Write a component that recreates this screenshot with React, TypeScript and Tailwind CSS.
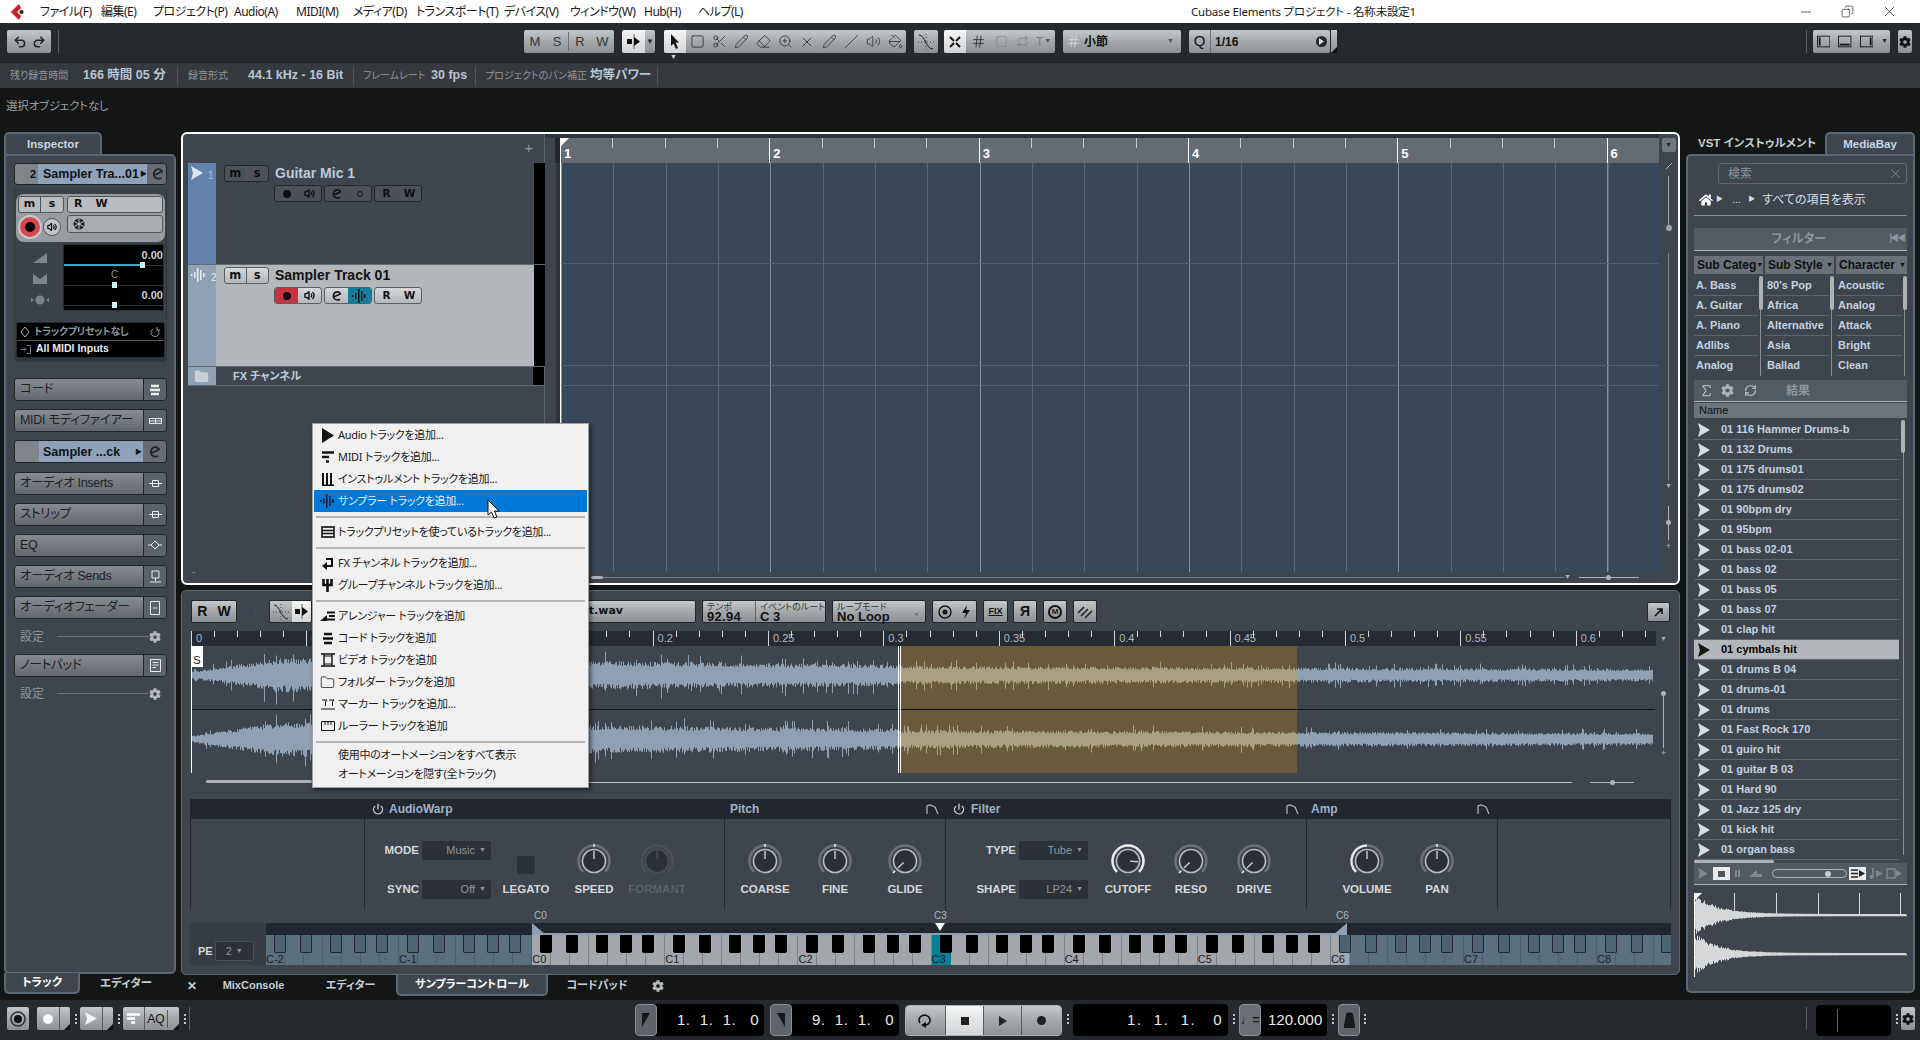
import { useMemo } from 'react';
import type { ReactNode } from 'react';
import { Undo2, Redo2, Square, Scissors, Pencil, Eraser, ZoomIn, X, Slash, Volume2, PaintBucket, Hash, Power, Folder, Repeat, Minus, Copy, Sigma, RefreshCw } from 'lucide-react';
import { FaCog, FaHome } from 'react-icons/fa';

const metal = 'bg-linear-to-b from-[#c6c9cb] via-[#a4a8ab] to-[#8d9195]';
const lightBtn = 'bg-linear-to-b from-[#f4f5f5] to-[#d2d4d6]';
const dim = 'text-[#8f959b]';

function Tri({ w = 12, h = 14, c = '#d5dde6' }: { w?: number; h?: number; c?: string }) {
  return (
    <svg width={w} height={h} viewBox="0 0 12 14" preserveAspectRatio="none" className="shrink-0">
      <polygon points="0,0 12,7 0,14 2,7" fill={c} />
    </svg>
  );
}

function Bars({ c = '#fff', s = 1 }: { c?: string; s?: number }) {
  return (
    <svg width={15 * s} height={14 * s} viewBox="0 0 15 14" className="shrink-0">
      <g fill={c}>
        <rect x="0" y="6" width="1.5" height="2" />
        <rect x="3" y="4" width="1.5" height="6" />
        <rect x="6" y="0" width="1.5" height="14" />
        <rect x="9" y="2" width="1.5" height="10" />
        <rect x="12" y="5" width="1.5" height="4" />
      </g>
    </svg>
  );
}

function Env() {
  return (
    <svg width="13" height="10" viewBox="0 0 13 10" className="shrink-0">
      <path d="M1 10V2L4 1L9 3L12 10" fill="none" stroke="#aeb8c2" strokeWidth="1.2" />
    </svg>
  );
}

function Dots() {
  return (
    <svg width="3" height="11" viewBox="0 0 3 11" className="shrink-0">
      <g fill="#c5c8ca">
        <rect x="1" y="0" width="2" height="2" />
        <rect x="1" y="4" width="2" height="2" />
        <rect x="1" y="8" width="2" height="2" />
      </g>
    </svg>
  );
}

function Corner() {
  return (
    <svg width="6" height="6" viewBox="0 0 6 6" className="shrink-0">
      <polygon points="6,0 6,6 0,6" fill="#111" />
    </svg>
  );
}

function E({ c = '#23272b', size = 14 }: { c?: string; size?: number }) {
  return (
    <svg width={size} height={size} viewBox="0 0 14 14" className="shrink-0">
      <path d="M2.5 8.5L11 4.5C10 1.5 4.5 1 3 5.5C1.8 9.5 5 13 10.5 11" fill="none" stroke={c} strokeWidth="1.8" />
    </svg>
  );
}

function TitleBar() {
  const menus = [
    ['ファイル(F)', 'w-[61px]'],
    ['編集(E)', 'w-[52px]'],
    ['プロジェクト(P)', 'w-[81px]'],
    ['Audio(A)', 'w-[62px]'],
    ['MIDI(M)', 'w-[57px]'],
    ['メディア(D)', 'w-[63px]'],
    ['トランスポート(T)', 'w-[88px]'],
    ['デバイス(V)', 'w-[66px]'],
    ['ウィンドウ(W)', 'w-[74px]'],
    ['Hub(H)', 'w-[54px]'],
    ['ヘルプ(L)', 'w-[60px]'],
  ];
  return (
    <div className="h-[23px] shrink-0 bg-white flex items-center text-[12px] tracking-[-0.5px] text-[#1a1a1a] font-['Noto_Sans','Noto_Sans_CJK_JP',sans-serif]">
      <svg width="18" height="18" viewBox="0 0 18 18" className="ml-[8px] shrink-0">
        <polygon points="9,1 17,9 9,17 1,9" fill="#ececec" />
        <polygon points="11,1 3,9 11,17 13,13 9,9 13,5" fill="#c3202c" />
        <circle cx="13.5" cy="9" r="2" fill="#222" />
      </svg>
      <div className="ml-[14px] flex w-[1151px]">
        {menus.map(([t, w]) => (
          <span key={t} className={`${w} whitespace-nowrap`}>{t}</span>
        ))}
      </div>
      <span className="whitespace-nowrap text-[11.5px] tracking-[-0.2px]">Cubase Elements プロジェクト - 名称未設定1</span>
      <div className="ml-auto flex items-center gap-[27px] pr-[22px]">
        <Minus size={16} strokeWidth={1} />
        <Copy size={13} strokeWidth={1.2} className="-scale-x-100" />
        <X size={17} strokeWidth={1} />
      </div>
    </div>
  );
}

function Toolbar() {
  const tools = [Square, Scissors, Pencil, Eraser, ZoomIn, X, Pencil, Slash, Volume2, PaintBucket];
  return (
    <div className="h-[40px] shrink-0 bg-[#26292d] border-b border-[#1c1e21] flex items-start pt-[7px] text-[#23272b]">
      <div className={`ml-[7px] w-[44px] h-[23px] rounded-[2px] ${metal} flex items-center justify-around px-[3px]`}>
        <Undo2 size={14} strokeWidth={2.6} />
        <Redo2 size={14} strokeWidth={2.6} />
      </div>
      <div className="ml-[7px] w-px h-[23px] bg-[#5a5f64]" />
      <div className={`ml-[465px] w-[90px] h-[23px] rounded-[2px] ${metal} flex items-center text-[13px] text-[#30353a]`}>
        <span className="w-[22px] text-center">M</span>
        <span className="w-[23px] text-center border-r border-[#6d7276]">S</span>
        <span className="w-[22px] text-center">R</span>
        <span className="w-[23px] text-center">W</span>
      </div>
      <div className="ml-[8px] w-[33px] h-[23px] rounded-[2px] flex overflow-hidden">
        <div className={`w-[23px] ${lightBtn} flex items-center justify-center`}>
          <svg width="15" height="15" viewBox="0 0 15 15">
            <rect x="1" y="5" width="5" height="5" fill="#111" />
            <path d="M8 0V15" stroke="#666" />
            <polygon points="8,3 14,7.5 8,12" fill="#111" />
          </svg>
        </div>
        <div className={`flex-1 ${metal} flex items-center justify-center text-[8px]`}>▼</div>
      </div>
      <div className="ml-[9px] flex flex-col items-start">
        <div className={`w-[242px] h-[23px] rounded-[2px] ${metal} flex items-center overflow-hidden`}>
          <div className={`w-[22px] h-full ${lightBtn} flex items-center justify-center`}>
            <svg width="10" height="15" viewBox="0 0 10 15"><path d="M1 0V12L3.6 9.5L6 15L8 14L5.6 8.6H9Z" fill="#111" /></svg>
          </div>
          {tools.map((T, i) => (
            <div key={i} className="w-[22px] flex items-center justify-center">
              <T size={i === 5 ? 16 : 15} strokeWidth={1.2} />
            </div>
          ))}
        </div>
        <span className="ml-[6px] text-[7px] leading-[8px] text-[#d5d7d9]">▼</span>
      </div>
      <div className={`ml-[8px] w-[24px] h-[23px] rounded-[2px] ${metal} flex items-center justify-center`}>
        <svg width="18" height="18" viewBox="0 0 18 18">
          <path d="M2 2C8 2 9 16 16 16" fill="none" stroke="#222" />
          <path d="M9 1V17M1 9H17" stroke="#444" strokeDasharray="1 2" />
        </svg>
      </div>
      <div className={`ml-[6px] w-[111px] h-[23px] rounded-[2px] ${metal} flex items-center overflow-hidden`}>
        <div className={`w-[22px] h-full ${lightBtn} flex items-center justify-center`}>
          <svg width="12" height="12" viewBox="0 0 12 12"><path d="M1 1L5 5M11 1L7 5M1 11L5 7M11 11L7 7" stroke="#111" strokeWidth="2" /></svg>
        </div>
        <Hash size={15} strokeWidth={1.3} className="mx-[5px]" />
        <Square size={13} strokeWidth={1} className="mx-[4px] text-[#777c81]" />
        <Repeat size={13} strokeWidth={1.4} className="mx-[4px] text-[#777c81]" />
        <span className="ml-[3px] text-[12px] text-[#777c81]">T</span>
        <span className="ml-[1px] text-[7px] text-[#555]">▼</span>
      </div>
      <div className={`ml-[8px] w-[118px] h-[23px] rounded-[2px] ${metal} flex items-center px-[3px] text-[12px] font-bold`}>
        <Hash size={15} strokeWidth={1} className="text-[#e8eaec]" />
        <span className="ml-[3px] text-[#111]">小節</span>
        <span className="ml-auto mr-[4px] text-[7px] text-[#555]">▼</span>
      </div>
      <div className={`ml-[8px] w-[141px] h-[23px] rounded-[2px] ${metal} flex items-center text-[#111]`}>
        <span className="w-[22px] text-center text-[15px] border-r border-[#6d7276]">Q</span>
        <span className="ml-[4px] text-[12px] font-bold">1/16</span>
        <span className="ml-auto mr-[3px] w-[11px] h-[11px] rounded-full bg-[#24282c] flex items-center justify-center">
          <svg width="5" height="7" viewBox="0 0 5 7"><polygon points="0,0 5,3.5 0,7" fill="#d8dadc" /></svg>
        </span>
      </div>
      <div className={`ml-[1px] w-[6px] h-[23px] ${metal} flex items-end`}><Corner /></div>
      <div className="ml-[469px] w-px h-[23px] bg-[#5a5f64]" />
      <div className={`ml-[6px] w-[77px] h-[23px] rounded-[2px] ${metal} flex items-center gap-[8px] pl-[4px]`}>
        <svg width="15" height="13" viewBox="0 0 15 13"><rect x=".5" y=".5" width="14" height="12" fill="none" stroke="#111" /><rect x="2" y="2" width="2" height="9" fill="#111" /></svg>
        <svg width="15" height="13" viewBox="0 0 15 13"><rect x=".5" y=".5" width="14" height="12" fill="none" stroke="#111" /><rect x="2" y="9" width="11" height="2" fill="#111" /></svg>
        <svg width="15" height="13" viewBox="0 0 15 13"><rect x=".5" y=".5" width="14" height="12" fill="none" stroke="#111" /><rect x="11" y="2" width="2" height="9" fill="#111" /></svg>
        <span className="ml-auto mr-[2px] text-[7px]">▼</span>
      </div>
      <div className={`ml-[8px] w-[14px] h-[23px] rounded-[2px] ${metal} flex items-center justify-center`}>
        <FaCog size={12} color="#111" />
      </div>
    </div>
  );
}

function InfoLine() {
  const Sep = () => <div className="w-px h-[18px] bg-[#55595e] shrink-0" />;
  const lab = `text-[10px] ${dim} whitespace-nowrap shrink-0`;
  const val = 'text-[12.5px] font-bold text-[#b8c6d4] whitespace-nowrap shrink-0';
  return (
    <div className="h-[25px] shrink-0 bg-[#363a3e] flex items-center">
      <span className={`${lab} ml-[10px] w-[73px]`}>残り録音時間</span>
      <span className={`${val} w-[94px]`}>166 時間 05 分</span>
      <Sep />
      <span className={`${lab} ml-[10px] w-[60px]`}>録音形式</span>
      <span className={`${val} w-[105px]`}>44.1 kHz - 16 Bit</span>
      <Sep />
      <span className={`${lab} ml-[9px] w-[68px]`}>フレームレート</span>
      <span className={`${val} w-[44px]`}>30 fps</span>
      <Sep />
      <span className={`${lab} ml-[9px] w-[105px]`}>プロジェクトのパン補正</span>
      <span className={`${val} w-[67px]`}>均等パワー</span>
      <Sep />
    </div>
  );
}

function SmallBtn({ children, w, on }: { children: ReactNode; w: string; on?: boolean }) {
  return (
    <span className={`${w} h-full flex items-center justify-center ${on ? 'text-[#111]' : ''}`}>{children}</span>
  );
}

function TrackButtons({ sel }: { sel?: boolean }) {
  const grp = sel
    ? 'bg-linear-to-b from-[#d6d8da] to-[#b5b8bb] border-[#5a5f64] text-[#111]'
    : 'bg-[#4b5157] border-[#23272b] text-[#0d0f11]';
  const g = `h-[17px] rounded-[3px] border flex items-center overflow-hidden font-['DejaVu_Sans',sans-serif] font-bold text-[11.5px] ${grp}`;
  return (
    <div className="flex flex-col">
      <div className={`${g} w-[45px] mt-[2px]`}>
        <SmallBtn w="w-[22px] border-r border-[#5a5f64]">m</SmallBtn>
        <SmallBtn w="w-[22px]">s</SmallBtn>
      </div>
    </div>
  );
}

function TrackControls({ sel }: { sel?: boolean }) {
  const grp = sel
    ? 'bg-linear-to-b from-[#d6d8da] to-[#b5b8bb] border-[#5a5f64] text-[#111]'
    : 'bg-[#4b5157] border-[#23272b] text-[#0d0f11]';
  const g = `w-[48px] h-[17px] rounded-[3px] border flex items-center overflow-hidden font-['DejaVu_Sans',sans-serif] font-bold text-[10.5px] ${grp}`;
  return (
    <div className="flex gap-[2px] ml-[58px] mt-[3px]">
      <div className={g}>
        <span className={`w-[24px] h-full flex items-center justify-center ${sel ? 'bg-[#c7333f]' : ''}`}>
          <span className="w-[8px] h-[8px] rounded-full bg-[#0d0f11]" />
        </span>
        <span className="w-[24px] flex justify-center"><Volume2 size={11} strokeWidth={3} /></span>
      </div>
      <div className={g}>
        <span className="w-[24px] flex justify-center"><E c="#111" size={12} /></span>
        <span className={`w-[24px] h-full flex items-center justify-center ${sel ? 'bg-[#0f7f9a]' : ''}`}>
          {sel ? <Bars c="#0d1a20" /> : <span className="w-[6px] h-[6px] rounded-full border border-[#0d0f11]" />}
        </span>
      </div>
      <div className={g}>
        <span className="w-[24px] text-center">R</span>
        <span className="w-[24px] text-center">W</span>
      </div>
    </div>
  );
}

function Track({ n, name, sel }: { n: number; name: string; sel?: boolean }) {
  return (
    <div className={`flex ${sel ? 'h-[101px]' : 'h-[102px] border-b border-[#636a71]'}`}>
      <div className={`w-[28px] shrink-0 pt-[3px] pl-[3px] flex gap-[2px] items-start text-[10px] ${sel ? 'bg-[#8fa1b5] text-[#e8edf2]' : 'bg-[#6282ad] text-[#a9bdd6]'}`}>
        {sel ? <Bars c="#e8edf2" /> : <Tri w={12} h={14} c="#dde6f0" />}
        <span className="ml-[3px] mt-[2px]">{n}</span>
      </div>
      <div className={`w-[318px] shrink-0 ${sel ? 'bg-[#b3b7bb]' : 'bg-[#3e454c]'}`}>
        <div className="flex items-start ml-[8px] h-[19px]">
          <TrackButtons sel={sel} />
          <span className={`ml-[6px] mt-[1px] text-[14px] font-bold leading-[18px] ${sel ? 'text-[#111]' : 'text-[#b9cadc]'}`}>{name}</span>
        </div>
        <TrackControls sel={sel} />
      </div>
      <div className="w-[11px] shrink-0 bg-black" />
    </div>
  );
}

function ProjectWindow() {
  const cells = Array.from({ length: 21 }, (_, i) => i);
  return (
    <div className="h-[453px] shrink-0 border-2 border-white rounded-[6px] bg-[#3e454c] flex overflow-hidden">
      <div className="w-[362px] shrink-0 pl-[5px] border-r border-[#5c636a] flex flex-col">
        <div className="h-[29px] flex items-center justify-end pr-[11px] text-[#8d949b] text-[15px]"><span>+</span></div>
        <Track n={1} name="Guitar Mic 1" />
        <Track n={2} name="Sampler Track 01" sel />
        <div className="h-[20px] flex border-t border-[#636a71] border-b">
          <div className="w-[28px] bg-[#8fa1b5] flex items-center justify-center">
            <Folder size={15} color="#dfe3e7" fill="#c9cfd5" strokeWidth={1} />
          </div>
          <span className="w-[318px] pl-[17px] text-[11px] font-bold text-[#c3cfdb] leading-[18px]">FX チャンネル</span>
          <div className="w-[11px] bg-black" />
        </div>
        <div className="flex-1 flex items-end pl-[4px] pb-[6px] text-[10px] text-[#8d949b]"><span className="leading-[10px]">-</span></div>
      </div>
      <div className="w-[1114px] shrink-0 flex flex-col">
        <div className="h-[4px] bg-[#2e343a]" />
        <div className="h-[25px] flex">
          <div className="w-[10px]" />
          <div className="w-[5px] bg-[#23282e]" />
          <div className="w-[1099px] bg-[#646b72] flex relative">
            <svg width="9" height="9" viewBox="0 0 9 9" className="absolute left-0 top-0"><polygon points="0,0 9,0 0,9" fill="#fff" /></svg>
            {cells.map((i) => (
              <div key={i} className="w-[52.33px] shrink-0 flex text-[13px] font-bold text-white">
                <div className={`w-px ${i % 4 === 0 ? 'h-[25px] bg-white' : 'h-[10px] bg-[#c5c9cd]'}`} />
                {i % 4 === 0 && <span className="ml-[3px] mt-[7px] leading-[17px]">{i / 4 + 1}</span>}
              </div>
            ))}
          </div>
        </div>
        <div className="h-[409px] flex">
          <div className="w-[15px] border-r-4 border-[#2e343a]" />
          <div className="w-[1099px] border-l border-white bg-[#364859] bg-[image:repeating-linear-gradient(90deg,#84939f_0_1px,transparent_1px_209.3px),repeating-linear-gradient(90deg,#56687a_0_1px,transparent_1px_52.33px)] flex flex-col">
            <div className="h-[101px] border-b border-[#4f6173]" />
            <div className="h-[102px] border-b border-[#4f6173]" />
            <div className="h-[20px] border-b border-[#4f6173]" />
          </div>
        </div>
        <div className="flex-1 flex items-center pl-[46px]">
          <div className="w-[12px] h-[3px] rounded-full bg-[#aeb2b6]" />
          <div className="w-[961px] h-px bg-[#7a8087]" />
          <span className="text-[7px] text-[#aeb2b6]">▼</span>
          <div className="ml-[8px] w-[60px] h-px bg-[#aeb2b6] flex items-center justify-center"><span className="shrink-0 w-[5px] h-[5px] rounded-full bg-[#aeb2b6]" /></div>
        </div>
      </div>
      <div className="flex-1 flex flex-col items-center pt-[4px]">
        <div className="w-[14px] h-[14px] rounded-[2px] bg-[#70777e] flex items-center justify-center text-[7px] text-[#23272b]">▼</div>
        <svg width="8" height="8" viewBox="0 0 8 8" className="mt-[10px]"><path d="M1 7L7 1" stroke="#aeb2b6" /></svg>
        <div className="mt-[6px] w-px h-[49px] bg-[#a0a5aa]" />
        <div className="w-[6px] h-[6px] rounded-full bg-[#a0a5aa]" />
        <div className="mt-[22px] w-px h-[228px] bg-[#7a8087]" />
        <span className="text-[7px] text-[#aeb2b6]">▼</span>
        <div className="mt-[14px] w-px h-[34px] bg-[#aeb2b6] flex items-center justify-center"><span className="shrink-0 w-[5px] h-[5px] rounded-full bg-[#aeb2b6]" /></div>
        <span className="text-[9px] text-[#aeb2b6]">+</span>
      </div>
    </div>
  );
}

function rng(seed: number) {
  let s = seed;
  return () => {
    s = (s * 16807) % 2147483647;
    return s / 2147483647;
  };
}

function Waveform() {
  const { blue, tan } = useMemo(() => {
    const r = rng(4242);
    let blue = '';
    let tan = '';
    for (let c = 0; c < 2; c++) {
      const cy = c === 0 ? 29 : 93;
      for (let x = 0; x < 1462; x++) {
        let env: number;
        if (x < 90) env = 4 + (x / 90) * 18;
        else if (x < 300) env = 21 - ((x - 90) / 210) * 2;
        else if (x < 710) env = 19 - ((x - 300) / 410) * 6;
        else env = 11.5 - ((x - 710) / 752) * 4;
        const spike = r() > 0.93 ? 1.7 : 1;
        const up = env * (0.5 + r() * 0.3) * spike;
        const dn = env * (0.5 + r() * 0.35) * spike;
        const seg = `M${x}.5 ${(cy - up).toFixed(1)}V${(cy + dn).toFixed(1)}`;
        if (x >= 709 && x < 1106) tan += seg;
        else blue += seg;
      }
    }
    return { blue, tan };
  }, []);
  return (
    <svg width="1464" height="127" viewBox="0 0 1464 127" className="block">
      <rect x="709" y="0" width="397" height="127" fill="#6a5a3b" />
      <path d="M0 63.5H1464" stroke="#111418" />
      <path d={blue} stroke="#8da0b4" fill="none" />
      <path d={tan} stroke="#aa9f82" fill="none" />
      <path d="M.5 0V137M707.5 0V127M709.5 0V127" stroke="#fff" fill="none" />
    </svg>
  );
}

function Knob({ label, v, arc, off }: { label: string; v: number; arc?: 'full' | 'half'; off?: boolean }) {
  const cx = 18;
  const cy = 17;
  const pt = (a: number, r: number) => {
    const t = (a * Math.PI) / 180;
    return `${(cx + r * Math.sin(t)).toFixed(2)} ${(cy - r * Math.cos(t)).toFixed(2)}`;
  };
  const arcPath = (from: number, to: number) => `M${pt(from, 15.5)}A15.5 15.5 0 ${to - from > 180 ? 1 : 0} 1 ${pt(to, 15.5)}`;
  const a = -135 + 270 * v;
  return (
    <div className="flex flex-col items-center w-full">
      <svg width="36" height="34" viewBox="0 0 36 34">
        <path d={arcPath(-135, 135)} fill="none" stroke={off ? '#4a5056' : '#6d7277'} strokeWidth="2.5" />
        {arc === 'full' && <path d={arcPath(-135, 135)} fill="none" stroke="#e8eaec" strokeWidth="2.5" />}
        {arc === 'half' && <path d={arcPath(-135, 0)} fill="none" stroke="#e8eaec" strokeWidth="2.5" />}
        {!off && !arc && <path d={`M${pt(a, 14)}L${pt(a, 17)}`} stroke="#e8eaec" strokeWidth="1.5" />}
        <circle cx={cx} cy={cy} r="11.5" fill="#2b3036" stroke={off ? '#494f55' : '#b9bdc1'} strokeWidth="1.6" />
        <path d={`M${pt(a, 2)}L${pt(a, 10)}`} stroke={off ? '#494f55' : '#d0d3d6'} strokeWidth="1.4" />
      </svg>
      <span className={`mt-[5px] text-[11.5px] font-bold leading-[13px] whitespace-nowrap ${off ? 'text-[#5c6369]' : 'text-[#d5d9dd]'}`}>{label}</span>
    </div>
  );
}

function Drop({ label, value }: { label: string; value: string }) {
  return (
    <div className="flex items-center justify-end">
      <span className="text-[11.5px] font-bold text-[#d5d9dd]">{label}</span>
      <div className="ml-[3px] w-[69px] h-[19px] shrink-0 bg-[#2c3138] rounded-[2px] flex items-center justify-end pr-[5px] gap-[4px] text-[11px] text-[#8f959b]">
        {value}
        <span className="text-[7px]">▼</span>
      </div>
    </div>
  );
}

function Keyboard() {
  const keys = Array.from({ length: 74 }, (_, i) => i);
  const blackPos: Record<number, string> = {
    0: '-right-[2px]',
    1: '-right-[9px]',
    3: '-right-[1px]',
    4: '-right-[6px]',
    5: '-right-[9px]',
  };
  return (
    <div className="flex-1 min-w-0 flex flex-col overflow-hidden">
      <div className="h-[12px] bg-[#22262e] flex">
        <div className="w-[266px] shrink-0" />
        <div className="w-[815px] shrink-0 border-b-2 border-[#8ea0b4] flex">
          <svg width="14" height="12" viewBox="0 0 14 12"><polygon points="0,0 14,12 0,12" fill="#8ea0b4" /></svg>
          <svg width="10" height="8" viewBox="0 0 10 8" className="ml-[389px]"><polygon points="0,0 10,0 5,8" fill="#fff" /></svg>
          <svg width="14" height="12" viewBox="0 0 14 12" className="ml-auto"><polygon points="14,0 14,12 0,12" fill="#8ea0b4" /></svg>
        </div>
      </div>
      <div className="h-[30px] flex">
        {keys.map((i) => {
          const inRange = i >= 14 && i <= 56;
          const oct = Math.floor(i / 7);
          const note = i % 7;
          const nextIn = i >= 14 && i < 56;
          return (
            <div
              key={i}
              className={`relative w-[19.03px] shrink-0 border-r flex items-end ${i === 35 ? 'bg-[#0b7f98] border-[#0b7f98]' : inRange ? 'bg-[#a3a7ab] border-[#7d8286]' : 'bg-[#587080] border-[#4a606f]'}`}
            >
              {note === 0 && <span className="text-[11px] leading-[12px] text-[#1c2024] whitespace-nowrap">{`C${oct - 2}`}</span>}
              {blackPos[note] && (
                <div className={`absolute z-10 top-0 ${blackPos[note]} w-[12px] h-[18px] rounded-b-[2px] ${nextIn ? 'bg-black' : 'bg-[#4c6372] border border-t-0 border-[#20282e]'}`} />
              )}
            </div>
          );
        })}
      </div>
    </div>
  );
}

function LowerZone() {
  const ticks = Array.from({ length: 64 }, (_, i) => i);
  const label = (i: number) => {
    const v = (i * 0.01).toFixed(2).replace(/0$/, '');
    return i === 0 ? '0' : v;
  };
  const btn = `h-[23px] rounded-[2px] border border-[#23272b] ${metal} flex items-center text-[#111]`;
  const square = `${btn} justify-center`;
  return (
    <div className="h-[385px] shrink-0 mt-[5px] border border-[#5b6875] rounded-[5px] bg-[#3e454c] flex flex-col px-[8px] pt-[9px] overflow-hidden">
      <div className="h-[23px] flex shrink-0">
        <div className={`ml-[1px] w-[46px] ${square} gap-[10px] text-[14px] font-bold`}><span>R</span><span>W</span></div>
        <span className="ml-[16px] mt-[9px] w-[4px] h-[4px] rounded-full bg-[#36506b]" />
        <div className={`ml-[12px] w-[43px] ${btn} overflow-hidden`}>
          <span className="w-[22px] h-full flex items-center justify-center">
            <svg width="18" height="18" viewBox="0 0 18 18"><path d="M2 2C8 2 9 16 16 16" fill="none" stroke="#222" /><path d="M9 1V17M1 9H17" stroke="#444" strokeDasharray="1 2" /></svg>
          </span>
          <span className={`flex-1 h-full ${lightBtn} flex items-center justify-center`}>
            <svg width="15" height="15" viewBox="0 0 15 15"><rect x="1" y="5" width="5" height="5" fill="#111" /><path d="M8 0V15" stroke="#666" /><polygon points="8,3 14,7.5 8,12" fill="#111" /></svg>
          </span>
        </div>
        <div className={`w-[384px] ${btn} justify-end pr-[72px] text-[11px] font-bold font-['DejaVu_Sans',sans-serif]`}><span>it.wav</span></div>
        <div className={`ml-[6px] w-[124px] ${btn}`}>
          <div className="w-[65px] pl-[4px] border-r border-[#5f6468] h-full flex flex-col justify-center leading-[10px]">
            <span className="text-[9px] text-[#33373b]">テンポ</span>
            <span className="text-[13px] font-bold tracking-[0.3px]">92.94</span>
          </div>
          <div className="flex-1 pl-[4px] h-full flex flex-col justify-center leading-[10px]">
            <span className="text-[9px] text-[#33373b] whitespace-nowrap">イベントのルート</span>
            <span className="text-[13px] font-bold">C 3</span>
          </div>
        </div>
        <div className={`ml-[6px] w-[94px] ${btn} justify-between pr-[5px]`}>
          <div className="pl-[4px] flex flex-col justify-center leading-[10px]">
            <span className="text-[9px] text-[#33373b]">ループモード</span>
            <span className="text-[13px] font-bold">No Loop</span>
          </div>
          <span className="mt-[8px] text-[7px] text-[#777c81]">▼</span>
        </div>
        <div className={`ml-[6px] w-[45px] ${btn} justify-around`}>
          <svg width="14" height="14" viewBox="0 0 14 14"><circle cx="7" cy="7" r="6" fill="none" stroke="#111" strokeWidth="1.4" /><circle cx="7" cy="7" r="2.5" fill="#111" /></svg>
          <svg width="10" height="14" viewBox="0 0 10 14"><polygon points="6,0 1,8 5,8 3,14 9,5 5,5" fill="#111" /></svg>
        </div>
        <div className={`ml-[6px] w-[25px] ${square} text-[9px] font-bold underline`}>FIX</div>
        <div className={`ml-[5px] w-[24px] ${square} text-[14px] font-bold`}>Я</div>
        <div className={`ml-[6px] w-[24px] ${square}`}>
          <span className="w-[14px] h-[14px] rounded-full border-2 border-[#111] flex items-center justify-center text-[8px] font-bold leading-none">M</span>
        </div>
        <div className={`ml-[6px] w-[24px] ${square}`}>
          <svg width="16" height="14" viewBox="0 0 16 14"><path d="M1 8L7 2M4 11L11 4M8 13L15 6" stroke="#222" strokeWidth="1.6" /></svg>
        </div>
        <div className={`ml-[550px] w-[23px] mt-[2px] !h-[20px] ${square}`}>
          <svg width="10" height="10" viewBox="0 0 10 10"><path d="M1 9L8 2M3 2H8V7" fill="none" stroke="#111" strokeWidth="1.6" /></svg>
        </div>
      </div>
      <div className="flex shrink-0 mt-[8px]">
        <div className="w-[1465px] ml-[1px] flex flex-col shrink-0">
          <div className="h-[15px] bg-[#262b33] flex overflow-hidden text-[11px] text-[#aeb8c2]">
            {ticks.map((i) => (
              <div key={i} className="w-[23.08px] shrink-0 flex">
                <div className={`w-px shrink-0 ${i % 5 === 0 ? 'h-[15px] bg-[#d5d7d9]' : 'h-[6px] bg-[#d5d7d9]'}`} />
                {i % 5 === 0 && <span className="ml-[4px] leading-[15px] whitespace-nowrap shrink-0">{label(i)}</span>}
              </div>
            ))}
          </div>
          <div className="relative h-[127px]">
            <Waveform />
            <div className="absolute left-0 top-0 w-[12px] h-[21px] bg-white text-[11px] text-[#111] flex items-end justify-center leading-[13px]">S</div>
          </div>
          <div className="h-[10px] flex items-end">
            <div className="ml-[15px] w-[106px] h-[3px] rounded-full bg-[#aeb2b6]" />
            <div className="w-[1260px] h-px bg-[#c5c8ca]" />
            <div className="ml-[18px] w-[44px] h-px bg-[#aeb2b6] flex items-center justify-center"><span className="shrink-0 w-[5px] h-[5px] rounded-full bg-[#aeb2b6]" /></div>
          </div>
        </div>
        <div className="flex-1 flex flex-col items-center text-[#aeb2b6] pt-[3px]">
          <span className="text-[7px]">▼</span>
          <div className="mt-[46px] w-[5px] h-[5px] rounded-full bg-[#aeb2b6]" />
          <div className="w-px h-[52px] bg-[#aeb2b6]" />
          <span className="text-[9px] leading-[10px]">+</span>
        </div>
      </div>
      <div className="mt-[16px] h-[20px] shrink-0 bg-[#22262e] flex items-center text-[12px] font-bold text-[#9fb3c8]">
        <Power size={12} className="ml-[182px] text-[#d5d9dd]" strokeWidth={2.5} />
        <span className="ml-[5px] w-[341px]">AudioWarp</span>
        <span className="w-[196px]">Pitch</span>
        <Env />
        <Power size={12} className="ml-[14px] text-[#d5d9dd]" strokeWidth={2.5} />
        <span className="ml-[6px] w-[315px]">Filter</span>
        <Env />
        <span className="ml-[12px] w-[166px]">Amp</span>
        <Env />
      </div>
      <div className="h-[90px] shrink-0 flex">
        <div className="w-[174px] shrink-0 border-l border-[#23272b]" />
        <div className="w-[360px] shrink-0 border-l border-[#23272b] flex pt-[22px]">
          <div className="w-[126px] shrink-0 flex flex-col gap-[20px]">
            <Drop label="MODE" value="Music" />
            <Drop label="SYNC" value="Off" />
          </div>
          <div className="w-[70px] shrink-0 flex flex-col items-center">
            <div className="mt-[15px] w-[18px] h-[18px] rounded-[2px] bg-[#2c3138]" />
            <span className="mt-[9px] text-[11.5px] font-bold text-[#d5d9dd] leading-[13px]">LEGATO</span>
          </div>
          <div className="w-[60px] mt-[3px] ml-[3px] shrink-0"><Knob label="SPEED" v={0.5} /></div>
          <div className="w-[66px] mt-[3px] shrink-0"><Knob label="FORMANT" v={0.5} off /></div>
        </div>
        <div className="w-[221px] shrink-0 border-l border-[#23272b] flex pt-[25px] pl-[10px] gap-[10px]">
          <div className="w-[60px]"><Knob label="COARSE" v={0.5} /></div>
          <div className="w-[60px]"><Knob label="FINE" v={0.5} /></div>
          <div className="w-[60px]"><Knob label="GLIDE" v={0} /></div>
        </div>
        <div className="w-[361px] shrink-0 border-l border-[#23272b] flex pt-[22px]">
          <div className="w-[142px] shrink-0 flex flex-col gap-[20px]">
            <Drop label="TYPE" value="Tube" />
            <Drop label="SHAPE" value="LP24" />
          </div>
          <div className="flex mt-[3px] ml-[15px] gap-[13px]">
            <div className="w-[50px]"><Knob label="CUTOFF" v={0.85} arc="full" /></div>
            <div className="w-[50px]"><Knob label="RESO" v={0} /></div>
            <div className="w-[50px]"><Knob label="DRIVE" v={0} /></div>
          </div>
        </div>
        <div className="w-[191px] shrink-0 border-l border-[#23272b] flex pt-[25px] pl-[30px] gap-[10px]">
          <div className="w-[60px]"><Knob label="VOLUME" v={0.5} arc="half" /></div>
          <div className="w-[60px]"><Knob label="PAN" v={0.5} /></div>
        </div>
        <div className="flex-1 border-l border-r border-[#23272b]" />
      </div>
      <div className="h-[14px] shrink-0 flex items-end text-[10px] text-[#aeb8c2] leading-[14px]">
        <span className="ml-[344px] w-[400px]">C0</span>
        <span className="w-[402px]">C3</span>
        <span>C6</span>
      </div>
      <div className="h-[42px] shrink-0 flex">
        <div className="w-[76px] shrink-0 bg-[#363d44] flex items-end pb-[4px] pl-[8px] gap-[2px]">
          <span className="text-[11px] font-bold text-[#d5d9dd] leading-[20px]">PE</span>
          <div className="w-[39px] h-[20px] rounded-[2px] bg-[#2c3138] border border-[#4a5056] flex items-center justify-center gap-[4px] text-[11px] text-[#8f959b]">2 <span className="text-[7px]">▼</span></div>
        </div>
        <Keyboard />
      </div>
    </div>
  );
}

function BottomTabs() {
  return (
    <div className="h-[21px] shrink-0 flex items-center text-[11px] font-bold text-[#c5cdd5]">
      <span className="w-[21px] text-center text-[12px]">✕</span>
      <span className="w-[103px] text-center">MixConsole</span>
      <span className="w-[91px] text-center">エディター</span>
      <span className="w-[152px] h-full bg-[#3e454c] border-b-2 border-x-2 border-[#5b6875] rounded-b-[5px] flex items-center justify-center text-white whitespace-nowrap">サンプラーコントロール</span>
      <span className="w-[98px] text-center">コードパッド</span>
      <FaCog size={12} color="#b5b9bd" className="ml-[6px]" />
    </div>
  );
}

function Inspector() {
  const sections: [string, ReactNode][] = [
    ['コード', <svg width="12" height="12" viewBox="0 0 12 12"><path d="M2 2H10M1 6H11M2 10H10" stroke="#e8eaec" strokeWidth="2.5" /></svg>],
    ['MIDI モディファイアー', <svg width="13" height="10" viewBox="0 0 13 10"><path d="M.5 2.5H12.5V7.5H.5ZM6.5 2.5V7.5M.5 5H12.5" fill="none" stroke="#e8eaec" /></svg>],
    ['SAMPLER', null],
    ['オーディオ Inserts', <svg width="13" height="11" viewBox="0 0 13 11"><path d="M0 5.5H13M3.5 2.5H9.5V8.5H3.5Z" fill="none" stroke="#e8eaec" /></svg>],
    ['ストリップ', <svg width="13" height="11" viewBox="0 0 13 11"><path d="M0 5.5H13M3.5 2.5H9.5V8.5H3.5Z" fill="none" stroke="#e8eaec" /></svg>],
    ['EQ', <svg width="14" height="14" viewBox="0 0 14 14"><path d="M0 7H3L7 3L11 7H14M3 7L7 11L11 7" fill="none" stroke="#e8eaec" /></svg>],
    ['オーディオ Sends', <svg width="11" height="13" viewBox="0 0 11 13"><path d="M2 1H9V8H2ZM5.5 8V11M0 12H11" fill="none" stroke="#e8eaec" /></svg>],
    ['オーディオフェーダー', <svg width="10" height="14" viewBox="0 0 10 14"><path d="M.5 .5H9.5V13.5H.5ZM3 7H7" fill="none" stroke="#e8eaec" /></svg>],
  ];
  const btn = 'h-[23px] shrink-0 rounded-[4px] border border-[#20242a] flex overflow-hidden';
  const Settings = () => (
    <div className="h-[18px] shrink-0 flex items-center px-[6px] text-[12px] text-[#8f959b]">
      設定
      <div className="ml-[13px] flex-1 h-px bg-[#6d7277]" />
      <FaCog size={12} color="#b5b9bd" />
    </div>
  );
  return (
    <div className="ml-[4px] w-[172px] shrink-0 flex flex-col">
      <div className="h-[23px] w-[98px] bg-[#3e454c] border-t-2 border-x-2 border-[#5b6875] rounded-t-[5px] flex items-center justify-center text-[11.5px] font-bold text-[#c9d6e3]">Inspector</div>
      <div className="h-[820px] shrink-0 -mt-px bg-[#3e454c] border-2 border-[#5b6875] rounded-b-[5px] rounded-tr-[5px] pt-[7px] pl-[8px] pr-[7px] flex flex-col">
        <div className="h-[22px] w-[153px] shrink-0 rounded-[4px] border border-[#20242a] flex overflow-hidden">
          <div className="w-[23px] bg-[#7f858b] text-right pr-[2px] text-[11px] font-bold text-[#111] leading-[20px] shrink-0">2</div>
          <div className="flex-1 bg-[#8ea2ba] flex items-center pl-[5px] text-[12.5px] font-bold text-[#111] whitespace-nowrap">Sampler Tra...01<span className="ml-[1px] text-[7px]">▶</span></div>
          <div className="w-[23px] shrink-0 bg-[#676d73] flex items-center justify-center"><E /></div>
        </div>
        <div className="mt-[4px] w-[153px] h-[173px] shrink-0 bg-[#3a4148] border-x border-b-[7px] border-x-[#2f353b] border-b-[#30363c] rounded-b-[4px] pt-[5px]">
          <div className="mx-[1px] h-[48px] rounded-[8px] bg-[#989ca0] flex p-[2px] gap-[3px] text-[11px] font-bold font-['DejaVu_Sans',sans-serif] text-[#111]">
            <div className="w-[46px] shrink-0">
              <div className="h-[17px] flex rounded-[3px] border border-[#4f5459] bg-[#b9bcbf] overflow-hidden">
                <span className="w-[22px] text-center border-r border-[#4f5459] leading-[14px]">m</span>
                <span className="flex-1 text-center leading-[14px]">s</span>
              </div>
              <div className="flex items-center mt-[2px]">
                <div className="w-[24px] h-[24px] rounded-full bg-[#d84750] border-2 border-[#c8cbce] flex items-center justify-center shrink-0">
                  <span className="w-[10px] h-[10px] rounded-full bg-black" />
                </div>
                <div className="ml-[1px] w-[18px] h-[18px] rounded-full bg-[#c2c5c8] border border-[#4f5459] flex items-center justify-center shrink-0"><Volume2 size={10} strokeWidth={3} /></div>
              </div>
            </div>
            <div className="flex-1">
              <div className="h-[17px] flex items-center gap-[13px] pl-[6px] rounded-[3px] border border-[#4f5459] bg-[#b9bcbf]"><span>R</span><span>W</span></div>
              <div className="mt-[2px] h-[18px] flex items-center pl-[5px] rounded-[3px] border border-[#4f5459] bg-[#a9adb0]">
                <svg width="12" height="12" viewBox="0 0 12 12"><circle cx="6" cy="6" r="5.5" fill="#222" /><path d="M6 1V11M1.5 3.5L10.5 8.5M10.5 3.5L1.5 8.5" stroke="#c8cbce" /></svg>
              </div>
            </div>
          </div>
          <div className="flex mt-[2px] mx-[1px]">
            <div className="w-[47px] shrink-0 flex flex-col items-center gap-[11px] pt-[9px] text-[#70777e]">
              <svg width="14" height="10" viewBox="0 0 14 10"><polygon points="0,10 14,0 14,10" fill="#7d848b" /></svg>
              <svg width="14" height="10" viewBox="0 0 14 10"><polygon points="0,0 7,5 14,0 14,10 0,10" fill="#7d848b" /></svg>
              <svg width="18" height="10" viewBox="0 0 18 10"><circle cx="9" cy="5" r="4.5" fill="#7d848b" /><polygon points="3,5 0,3 0,7" fill="#7d848b" /><polygon points="15,5 18,3 18,7" fill="#7d848b" /></svg>
            </div>
            <div className="w-[101px] h-[67px] shrink-0 bg-black rounded-[2px] border border-[#262b30] flex flex-col text-[11px] font-bold text-[#c8d2dc] text-right leading-[14px]">
              <span className="mt-[3px]">0.00</span>
              <div className="h-[6px] flex items-center shrink-0"><div className="w-[76px] h-[2px] bg-[#2fb0c8]" /><div className="w-[5px] h-[6px] bg-[#d5f0f6]" /><div className="flex-1 h-px bg-[#2c3136]" /></div>
              <span className="text-center text-[10px] font-normal text-[#8f959b] pl-[2px] h-[14px]">C</span>
              <div className="h-[6px] flex items-center shrink-0"><div className="w-[48px] h-px bg-[#2c3136]" /><div className="w-[5px] h-[6px] bg-[#d5f0f6]" /><div className="flex-1 h-px bg-[#2c3136]" /></div>
              <span className="h-[14px]">0.00</span>
              <div className="h-[6px] flex items-center shrink-0"><div className="w-[48px] h-px bg-[#2c3136]" /><div className="w-[5px] h-[6px] bg-[#d5f0f6]" /><div className="flex-1 h-px bg-[#2c3136]" /></div>
            </div>
          </div>
          <div className="mt-[11px] mx-[1px] h-[36px] bg-black rounded-[3px] border border-[#262b30] flex flex-col text-[10px]">
            <div className="h-[19px] flex items-center pl-[3px] pr-[4px] text-[#8f959b] border-b border-[#50565c]">
              <svg width="10" height="12" viewBox="0 0 10 12"><path d="M5 1L9 6L5 11L1 6Z" fill="none" stroke="#aeb2b6" /></svg>
              <span className="ml-[4px] flex-1 font-bold tracking-[-0.3px]">トラックプリセットなし</span>
              <svg width="10" height="10" viewBox="0 0 10 10"><path d="M3 2A4 4 0 1 0 7 2M7 0V3H10" fill="none" stroke="#8f959b" /></svg>
            </div>
            <div className="flex-1 flex items-center pl-[4px]">
              <svg width="10" height="9" viewBox="0 0 10 9"><path d="M0 4.5H5M3 2.5L5 4.5L3 6.5M6 .5H9.5V8.5H6" fill="none" stroke="#70777e" /></svg>
              <span className="ml-[5px] text-[10.5px] font-bold text-[#e8eaec]">All MIDI Inputs</span>
            </div>
          </div>
        </div>
        <div className="mt-[16px] w-[153px] flex flex-col gap-[8.2px]">
          {sections.map(([t, icon]) =>
            t === 'SAMPLER' ? (
              <div key={t} className={btn}>
                <div className="w-[24px] bg-[#7f858b]" />
                <div className="flex-1 bg-[#8ea2ba] pl-[4px] flex items-center text-[12.5px] font-bold text-[#111]">Sampler ...ck<span className="ml-auto mr-[1px] text-[7px]">▶</span></div>
                <div className="w-[23px] bg-[#676d73] flex items-center justify-center"><E /></div>
              </div>
            ) : (
              <div key={t} className={btn}>
                <div className="flex-1 bg-linear-to-b from-[#868c92] to-[#62686e] pl-[5px] flex items-center text-[12.5px] tracking-[-0.3px] text-[#1d2125] whitespace-nowrap">{t}</div>
                <div className="w-[23px] bg-[#5c6269] border-l border-[#20242a] flex items-center justify-center">{icon}</div>
              </div>
            ),
          )}
          <Settings />
          <div className={btn}>
            <div className="flex-1 bg-linear-to-b from-[#868c92] to-[#62686e] pl-[5px] flex items-center text-[12.5px] tracking-[-0.3px] text-[#1d2125]">ノートパッド</div>
            <div className="w-[23px] bg-[#5c6269] border-l border-[#20242a] flex items-center justify-center">
              <svg width="11" height="13" viewBox="0 0 11 13"><path d="M.5 .5H10.5V12.5H.5ZM2.5 3.5H8.5M2.5 6H8.5M2.5 8.5H6" fill="none" stroke="#e8eaec" /></svg>
            </div>
          </div>
          <Settings />
        </div>
      </div>
      <div className="h-[21px] shrink-0 -mt-px flex items-center text-[11.5px] font-bold">
        <span className="w-[76px] h-full bg-[#3e454c] border-b-2 border-x-2 border-[#5b6875] rounded-b-[5px] flex items-center justify-center text-white">トラック</span>
        <span className="ml-[20px] text-[#c5cdd5]">エディター</span>
      </div>
    </div>
  );
}

function FilterCol({ head, items, w }: { head: string; items: string[]; w: string }) {
  return (
    <div className={`${w} shrink-0`}>
      <div className="h-[18px] bg-[#6a7178] flex items-center pl-[3px] text-[12px] font-bold text-[#0e1012] whitespace-nowrap overflow-hidden">
        {head}
        <span className="ml-auto pr-[1px] text-[7px]">▼</span>
      </div>
      <div className="mt-[2px] flex">
        <div className="flex-1 min-w-0">
          {items.map((t, i) => (
            <div key={t} className={`h-[20px] pl-[2px] leading-[19px] text-[11px] font-bold text-[#c4d2e0] whitespace-nowrap ${i < 4 ? 'border-b border-[#5f666d]' : ''}`}>{t}</div>
          ))}
        </div>
        <div className="w-[5px] shrink-0 flex flex-col items-center">
          <div className="w-[4px] h-[34px] rounded-full bg-[#aeb2b6]" />
          <div className="w-px flex-1 bg-[#8a9096]" />
        </div>
      </div>
    </div>
  );
}

function MediaBay() {
  const names = ['01 116 Hammer Drums-b', '01 132 Drums', '01 175 drums01', '01 175 drums02', '01 90bpm dry', '01 95bpm', '01 bass 02-01', '01 bass 02', '01 bass 05', '01 bass 07', '01 clap hit', '01 cymbals hit', '01 drums B 04', '01 drums-01', '01 drums', '01 Fast Rock 170', '01 guiro hit', '01 guitar B 03', '01 Hard 90', '01 Jazz 125 dry', '01 kick hit', '01 organ bass'];
  const preview = useMemo(() => {
    const r = rng(99);
    let p = '';
    for (let c = 0; c < 2; c++) {
      const cy = c === 0 ? 22 : 61;
      for (let x = 0; x < 212; x++) {
        const env = 1 + 19 * Math.exp(-x / 24) * (0.7 + r() * 0.4);
        p += `M${x}.5 ${(cy - env).toFixed(1)}V${(cy + env).toFixed(1)}`;
      }
    }
    return p;
  }, []);
  return (
    <div className="ml-[6px] w-[229px] shrink-0 flex flex-col">
      <div className="h-[23px] flex items-center text-[11.5px] font-bold">
        <span className="w-[139px] pl-[12px] text-[#c5cdd5] whitespace-nowrap">VST インストゥルメント</span>
        <span className="w-[90px] h-full bg-[#3e454c] border-t-2 border-x-2 border-[#5b6875] rounded-t-[5px] flex items-center justify-center text-[#c9d6e3]">MediaBay</span>
      </div>
      <div className="h-[839px] shrink-0 -mt-px bg-[#3e454c] border-2 border-[#5b6875] rounded-[5px] rounded-tr-none pl-[6px] pr-[6px] flex flex-col">
        <div className="mt-[7px] ml-[24px] w-[189px] h-[21px] shrink-0 border border-[#5f666d] rounded-[3px] flex items-center pl-[9px] pr-[3px] text-[12px] text-[#8f959b]">
          検索
          <X size={15} strokeWidth={1.3} className="ml-auto" />
        </div>
        <div className="h-[32px] shrink-0 w-[213px] border-b border-[#8a9096] flex items-center pl-[5px] text-[12px] text-[#d5dde6]">
          <FaHome size={14} color="#fff" />
          <span className="ml-[3px] text-[7px]">▶</span>
          <span className="ml-[9px] text-[11px]">...</span>
          <span className="ml-[7px] text-[7px]">▶</span>
          <span className="ml-[7px] whitespace-nowrap">すべての項目を表示</span>
        </div>
        <div className="mt-[12px] h-[23px] shrink-0 w-[213px] bg-[#525a62] border-b border-[#aeb2b6] flex items-center text-[12px] font-bold text-[#8f959b]">
          <span className="flex-1 text-center pl-[14px]">フィルター</span>
          <span className="pr-[3px] text-[9px] tracking-[-2px]">|◀◀</span>
        </div>
        <div className="mt-[5px] w-[213px] flex gap-[2px] shrink-0">
          <FilterCol w="w-[69px]" head="Sub Categ" items={['A. Bass', 'A. Guitar', 'A. Piano', 'Adlibs', 'Analog']} />
          <FilterCol w="w-[69px]" head="Sub Style" items={["80's Pop", 'Africa', 'Alternative', 'Asia', 'Ballad']} />
          <FilterCol w="w-[71px]" head="Character" items={['Acoustic', 'Analog', 'Attack', 'Bright', 'Clean']} />
        </div>
        <div className="mt-[4px] h-[22px] shrink-0 w-[213px] bg-[#525a62] border-b border-[#aeb2b6] flex items-center pl-[5px] text-[#aeb2b6]">
          <Sigma size={15} strokeWidth={2} />
          <FaCog size={13} className="ml-[7px]" />
          <RefreshCw size={13} strokeWidth={2.5} className="ml-[10px]" />
          <span className="ml-[29px] text-[12px] font-bold text-[#8f959b]">結果</span>
        </div>
        <div className="mt-[1px] h-[15px] shrink-0 w-[213px] bg-[#6d747b] pl-[5px] text-[11px] leading-[15px] text-[#111]">Name</div>
        <div className="flex w-[213px] h-[443px] shrink-0 mt-[2px]">
          <div className="w-[205px] shrink-0">
            {names.map((n, i) => (
              <div key={n} className={`h-[20px] flex items-center pl-[4px] text-[11px] font-bold border-b border-[#5f666d] ${i === 11 ? 'bg-[#b3b7bb] text-black' : 'text-[#c4d2e0]'}`}>
                <Tri w={12} h={14} c={i === 11 ? '#101a10' : '#d5dde6'} />
                <span className="ml-[11px] whitespace-nowrap">{n}</span>
              </div>
            ))}
            <div className="h-[3px] w-[80px] rounded-full bg-[#aeb2b6]" />
          </div>
          <div className="flex-1 flex flex-col items-center">
            <div className="w-[4px] h-[33px] rounded-full bg-[#aeb2b6]" />
            <div className="w-px h-[402px] bg-[#8a9096]" />
          </div>
        </div>
        <div className="h-[22px] shrink-0 w-[213px] bg-[#525a62] border-b border-[#aeb2b6] flex items-center pl-[4px] text-[#828890]">
          <Tri w={10} h={11} c="#828890" />
          <span className="ml-[5px] w-[17px] h-[13px] bg-[#e8eaec] flex items-center justify-center"><span className="w-[7px] h-[6px] bg-[#555]" /></span>
          <span className="ml-[5px] flex gap-[1px]"><span className="w-[2px] h-[7px] bg-[#828890]" /><span className="w-[2px] h-[7px] bg-[#828890]" /></span>
          <svg width="13" height="7" viewBox="0 0 13 7" className="ml-[9px]"><polygon points="0,7 8,0 8,4 13,4 13,7" fill="#828890" /></svg>
          <div className="ml-[10px] w-[75px] h-[9px] rounded-full border border-[#aeb2b6] flex items-center justify-end pr-[15px]"><span className="w-[6px] h-[6px] rounded-full bg-[#c5c8ca]" /></div>
          <span className="ml-[2px] w-[17px] h-[13px] bg-[#e8eaec] flex items-center justify-center">
            <svg width="14" height="9" viewBox="0 0 14 9"><path d="M0 1H7M0 4.5H7M0 8H7" stroke="#222" strokeWidth="1.4" /><polygon points="8,1 14,4.5 8,8" fill="#222" /></svg>
          </span>
          <svg width="34" height="11" viewBox="0 0 34 11" className="ml-[3px]"><path d="M4 0V9" stroke="#828890" strokeWidth="1.5" /><circle cx="2.5" cy="9" r="2" fill="#828890" /><polygon points="7,2 14,5.5 7,9" fill="#828890" /><rect x="18" y="1" width="8" height="9" fill="none" stroke="#828890" strokeWidth="1.5" /><polygon points="27,2 33,5.5 27,9" fill="#828890" /></svg>
        </div>
        <svg width="213" height="84" viewBox="0 0 213 84" className="mt-[8px] block shrink-0">
          <path d={preview} stroke="#d5d7d9" fill="none" />
          <path d="M.5 0V84" stroke="#fff" />
          <polygon points="0,0 8,0 0,8" fill="#fff" />
          <path d="M40.5 0V22M82.5 0V22M124.5 0V22M165.5 0V22M206.5 0V22" stroke="#d5d7d9" />
          <path d="M0 22.5H213M0 61.5H213" stroke="#d5d7d9" strokeWidth="1.6" />
        </svg>
      </div>
    </div>
  );
}

function Locator({ value, arrow, w }: { value: string; arrow: string; w: string }) {
  return (
    <div className={`${w} h-[32px] rounded-[4px] bg-black flex items-center shrink-0`}>
      <div className="w-[22px] h-full rounded-[4px] border border-[#8a9096] bg-[#5e646a] flex items-center justify-center">
        <svg width="9" height="14" viewBox="0 0 9 14"><polygon points={arrow} fill="#16181a" /></svg>
      </div>
      <span className="ml-auto pr-[5px] text-[15px] tracking-[0.5px] text-[#e8eaec] whitespace-pre">{value}</span>
    </div>
  );
}

function Transport() {
  return (
    <div className="h-[40px] shrink-0 bg-[#26292d] flex items-start text-[#111]">
      <div className={`ml-[7px] mt-[7px] w-[22px] h-[23px] rounded-[2px] ${metal} flex items-center justify-center`}>
        <svg width="16" height="16" viewBox="0 0 16 16"><circle cx="8" cy="8" r="7" fill="none" stroke="#333" strokeWidth="1.6" /><circle cx="8" cy="8" r="4" fill="#111" /></svg>
      </div>
      <div className={`ml-[8px] mt-[7px] w-[33px] h-[23px] rounded-[2px] ${metal} flex items-center`}>
        <span className="w-[23px] flex justify-center border-r border-[#555a5f] h-full items-center"><span className="w-[10px] h-[10px] rounded-full bg-white" /></span>
        <span className="flex-1 h-full flex items-end justify-end"><Corner /></span>
      </div>
      <span className="ml-[4px] mt-[14px]"><Dots /></span>
      <div className={`ml-[3px] mt-[7px] w-[33px] h-[23px] rounded-[2px] ${metal} flex items-center`}>
        <span className="w-[23px] flex justify-center border-r border-[#555a5f] h-full items-center"><Tri w={12} h={13} c="#f2f3f4" /></span>
        <span className="flex-1 h-full flex items-end justify-end"><Corner /></span>
      </div>
      <span className="ml-[4px] mt-[14px]"><Dots /></span>
      <div className={`ml-[3px] mt-[7px] w-[56px] h-[23px] rounded-[2px] ${metal} flex items-center`}>
        <span className="w-[22px] flex justify-center border-r border-[#555a5f] h-full items-center">
          <svg width="14" height="11" viewBox="0 0 14 11"><path d="M0 1.5H13M0 5.5H8M4 9.5H8" stroke="#fff" strokeWidth="2.5" /></svg>
        </span>
        <span className="w-[23px] text-center text-[12px] border-r border-[#555a5f]">AQ</span>
        <span className="flex-1 h-full flex items-end justify-end"><Corner /></span>
      </div>
      <span className="ml-[4px] mt-[14px]"><Dots /></span>
      <div className="ml-[3px] mt-[7px] w-px h-[23px] bg-[#5a5f64]" />
      <div className="ml-[445px] mt-[4px] flex items-center gap-[6px]">
        <Locator w="w-[129px]" value="1.  1.  1.   0" arrow="0,0 8,0 0,14" />
        <Locator w="w-[129px]" value="9.  1.  1.   0" arrow="0,0 8,14 8,0" />
      </div>
      <div className="ml-[6px] mt-[5px] w-[157px] h-[31px] rounded-[4px] border border-[#aeb2b6] flex overflow-hidden">
        <span className={`w-[40px] ${metal} flex items-center justify-center border-r border-[#555a5f]`}>
          <svg width="18" height="14" viewBox="0 0 18 14"><path d="M3 9A5.5 5 0 1 1 9 11" fill="none" stroke="#111" strokeWidth="1.6" /><polygon points="9,8 9,14 4,11" fill="#111" /></svg>
        </span>
        <span className={`w-[38px] ${lightBtn} flex items-center justify-center border-r border-[#555a5f]`}><span className="w-[8px] h-[8px] bg-[#222]" /></span>
        <span className={`w-[38px] ${metal} flex items-center justify-center border-r border-[#555a5f]`}><svg width="8" height="10" viewBox="0 0 8 10"><polygon points="0,0 8,5 0,10" fill="#222" /></svg></span>
        <span className={`flex-1 ${metal} flex items-center justify-center`}><span className="w-[9px] h-[9px] rounded-full bg-[#222]" /></span>
      </div>
      <span className="ml-[4px] mt-[14px]"><Dots /></span>
      <div className="ml-[4px] mt-[4px] w-[155px] h-[32px] rounded-[4px] bg-black flex items-center justify-end pr-[5px] text-[15px] tracking-[1.5px] text-[#e8eaec] whitespace-pre">1.  1.  1.   0</div>
      <span className="ml-[4px] mt-[14px]"><Dots /></span>
      <div className="ml-[4px] mt-[4px] w-[88px] h-[32px] rounded-[4px] bg-black flex items-center">
        <span className="w-[22px] h-full rounded-[4px] border border-[#8a9096] bg-[#6a7076] flex items-center justify-center text-[#16181a] text-[12px] font-bold">♩=</span>
        <span className="ml-[7px] text-[15px] text-[#e8eaec]">120.000</span>
      </div>
      <span className="ml-[4px] mt-[14px]"><Dots /></span>
      <div className="ml-[4px] mt-[4px] w-[22px] h-[32px] rounded-[4px] border border-[#8a9096] bg-[#5e646a] flex items-center justify-center">
        <svg width="11" height="16" viewBox="0 0 11 16"><path d="M3 1H8L11 16H0ZM4 13L9 3" fill="#16181a" stroke="#16181a" /></svg>
      </div>
      <span className="ml-[3px] mt-[14px]"><Dots /></span>
      <div className="ml-[440px] mt-[7px] w-px h-[23px] bg-[#5a5f64]" />
      <div className="ml-[9px] mt-[5px] w-[75px] h-[31px] rounded-[4px] bg-black flex">
        <div className="ml-[21px] mt-[4px] w-px h-[23px] bg-[#5a5f64]" />
      </div>
      <span className="ml-[4px] mt-[14px]"><Dots /></span>
      <div className={`ml-[3px] mt-[7px] w-[14px] h-[23px] rounded-[2px] ${metal} flex items-center justify-center`}><FaCog size={12} color="#111" /></div>
    </div>
  );
}

type MenuEntry = { t: string; icon?: ReactNode; on?: boolean } | 'sep' | { small: string };

function AddTrackMenu() {
  const k = '#111';
  const entries: MenuEntry[] = [
    { t: 'Audio トラックを追加...', icon: <svg width="12" height="15" viewBox="0 0 12 15"><polygon points="0,0 12,7.5 0,15" fill={k} /></svg> },
    { t: 'MIDI トラックを追加...', icon: <svg width="12" height="12" viewBox="0 0 12 12"><path d="M0 1.5H12M0 6H7M4 10.5H7" stroke={k} strokeWidth="2.4" /></svg> },
    { t: 'インストゥルメント トラックを追加...', icon: <svg width="12" height="13" viewBox="0 0 12 13"><path d="M1 0V13M5 0V13M9 0V13" stroke={k} strokeWidth="2" /><path d="M0 13H12" stroke={k} strokeWidth="3" /></svg> },
    { t: 'サンプラー トラックを追加...', on: true, icon: <Bars c="#0a1a2a" /> },
    'sep',
    { t: 'トラックプリセットを使っているトラックを追加...', icon: <svg width="14" height="12" viewBox="0 0 14 12"><rect x="1" y="1" width="12" height="10" fill="none" stroke={k} strokeWidth="1.6" /><path d="M1 4.5H13M1 7.5H13" stroke={k} strokeWidth="1.4" /></svg> },
    'sep',
    { t: 'FX チャンネル トラックを追加...', icon: <svg width="12" height="13" viewBox="0 0 12 13"><path d="M4 2H10V9H3" fill="none" stroke={k} strokeWidth="2" /><polygon points="0,9 5,5 5,13" fill={k} /></svg> },
    { t: 'グループチャンネル トラックを追加...', icon: <svg width="11" height="13" viewBox="0 0 11 13"><path d="M1.5 0V6H9.5V0M5.5 0V13" fill="none" stroke={k} strokeWidth="2.6" /></svg> },
    'sep',
    { t: 'アレンジャー トラックを追加', icon: <svg width="15" height="10" viewBox="0 0 15 10"><polygon points="0,10 7,4 7,10" fill={k} /><path d="M7 1.5H15M9 5H15M7 8.5H15" stroke={k} strokeWidth="1.8" /></svg> },
    { t: 'コード トラックを追加', icon: <svg width="12" height="13" viewBox="0 0 12 13"><path d="M2 2H10M1 6.5H11M2 11H10" stroke={k} strokeWidth="2.4" /></svg> },
    { t: 'ビデオ トラックを追加', icon: <svg width="14" height="14" viewBox="0 0 14 14"><path d="M0 1H14M0 13H14M3 1V13M11 1V13" fill="none" stroke={k} strokeWidth="1.4" /><path d="M3 3H11M3 11H11" stroke={k} /></svg> },
    { t: 'フォルダー トラックを追加', icon: <Folder size={15} strokeWidth={1.2} color={k} /> },
    { t: 'マーカー トラックを追加...', icon: <svg width="14" height="11" viewBox="0 0 14 11"><path d="M1 1H6L4.5 3V7M8 1H13L11.5 3V7M0 10H14" fill="none" stroke={k} /></svg> },
    { t: 'ルーラー トラックを追加', icon: <svg width="14" height="10" viewBox="0 0 14 10"><path d="M.5 .5H13.5V9.5H.5ZM4 .5V4M7 .5V4M10 .5V4" fill="none" stroke={k} /></svg> },
    'sep',
    { small: '使用中のオートメーションをすべて表示' },
    { small: 'オートメーションを隠す(全トラック)' },
  ];
  return (
    <div className="absolute left-[312px] top-[423px] w-[277px] h-[365px] bg-[#f0f0f0] border border-[#a0a0a0] shadow-[2px_2px_4px_rgba(0,0,0,0.55)] text-[11px] tracking-[-0.3px] text-[#1a1a1a] z-20 font-['Noto_Sans','Noto_Sans_CJK_JP',sans-serif]">
      {entries.map((e, i) => {
        if (e === 'sep') return <div key={i} className="h-[9px] flex items-center mx-[3px]"><div className="w-full h-[2px] bg-[#b5b5b5]" /></div>;
        if ('small' in e) return <div key={i} className="h-[19px] pl-[25px] flex items-center whitespace-nowrap">{e.small}</div>;
        return (
          <div key={i} className={`h-[22px] mx-[1px] flex items-center whitespace-nowrap ${e.on ? 'bg-[#0078d7] text-[#e8f0f8]' : ''}`}>
            <span className="w-[24px] pl-[3px] shrink-0 flex justify-center">{e.icon}</span>
            {e.t}
          </div>
        );
      })}
    </div>
  );
}

export default function App() {
  return (
    <div className="relative w-[1920px] h-[1040px] overflow-hidden bg-[#141616] flex flex-col font-['Liberation_Sans','Noto_Sans_CJK_JP',sans-serif] [font-feature-settings:'palt']">
      <TitleBar />
      <Toolbar />
      <InfoLine />
      <div className="h-[44px] shrink-0 pl-[6px] pt-[10px] text-[11.5px] tracking-[-0.2px] text-[#9a9fa4]">選択オブジェクトなし</div>
      <div className="h-[868px] shrink-0 flex">
        <Inspector />
        <div className="ml-[5px] w-[1499px] shrink-0 flex flex-col">
          <ProjectWindow />
          <LowerZone />
          <BottomTabs />
        </div>
        <MediaBay />
      </div>
      <Transport />
      <AddTrackMenu />
      <svg width="14" height="20" viewBox="0 0 14 20" className="absolute left-[487px] top-[499px] z-30">
        <path d="M1 1V16L4.5 13L7 19L10 18L7.5 12H12Z" fill="#fff" stroke="#111" />
      </svg>
    </div>
  );
}
